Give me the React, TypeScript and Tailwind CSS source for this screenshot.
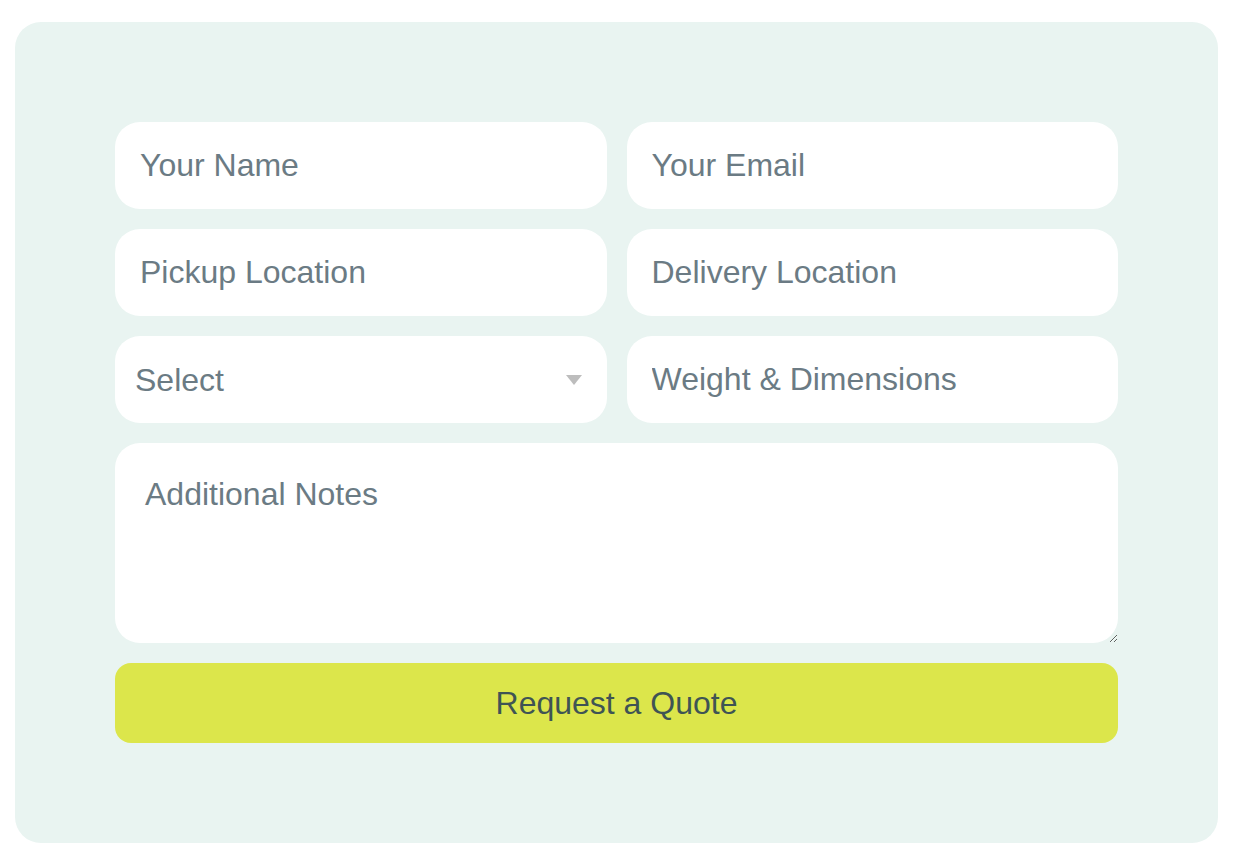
const field =
  "h-[87px] w-full rounded-[25px] bg-white px-[25px] text-[32px] text-[#5f6f78] placeholder:text-[#6b7b84] outline-none";

export default function App() {
  return (
    <div className="min-h-screen bg-white px-[15px] pt-[22px] font-['Liberation_Sans',Arial,sans-serif]">
      <form className="w-[1203px] h-[821px] rounded-[26px] bg-[#e9f4f1] p-[100px] flex flex-col gap-[20px]">
        <div className="grid grid-cols-2 gap-x-[20px] gap-y-[20px]">
          <input className={field} placeholder="Your Name" />
          <input className={field} placeholder="Your Email" />
          <input className={field} placeholder="Pickup Location" />
          <input className={field} placeholder="Delivery Location" />
          <div className="relative">
            <select className="h-[87px] w-full appearance-none rounded-[25px] bg-white pl-[20px] text-[32px] text-[#6b7b84] outline-none" defaultValue="">
              <option value="">Select</option>
              <option>Full Truckload</option>
              <option>Less Than Truckload</option>
            </select>
            <svg className="pointer-events-none absolute right-[25px] top-[39px]" width="16" height="10" viewBox="0 0 16 10">
              <path d="M0 0h16L8 10z" fill="#bdbdbd" />
            </svg>
          </div>
          <input className={field} placeholder="Weight & Dimensions" />
        </div>
        <textarea
          className="h-[200px] w-full rounded-[25px] bg-white px-[30px] pt-[27px] text-[32px] text-[#5f6f78] placeholder:text-[#6b7b84] outline-none"
          placeholder="Additional Notes"
        />
        <button type="button" className="h-[80px] w-full rounded-[16px] bg-[#dce64b] text-[32px] text-[#3f5454]">
          Request a Quote
        </button>
      </form>
    </div>
  );
}
